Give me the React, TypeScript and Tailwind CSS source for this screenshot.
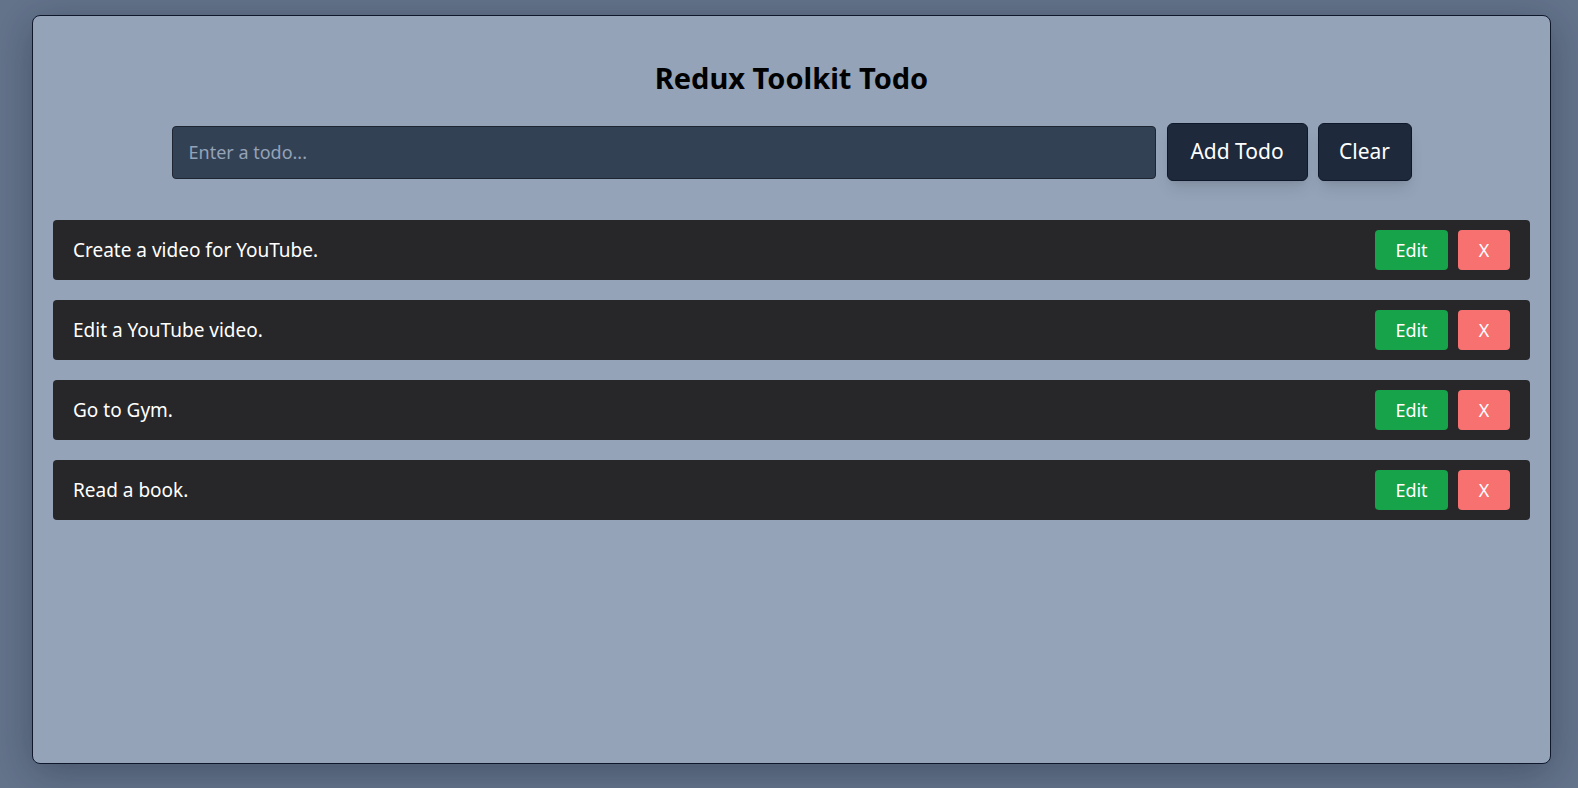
import { useState } from "react";

type Todo = {
  id: number;
  text: string;
};

const initialTodos: Todo[] = [
  { id: 1, text: "Create a video for YouTube." },
  { id: 2, text: "Edit a YouTube video." },
  { id: 3, text: "Go to Gym." },
  { id: 4, text: "Read a book." },
];

function TodoItem({ todo, onRemove }: { todo: Todo; onRemove: (id: number) => void }) {
  return (
    <li className="flex h-[60px] items-center justify-between rounded bg-[#27272a] px-5">
      <span className="text-[19px] text-white">{todo.text}</span>
      <div className="flex items-center gap-2.5">
        <button className="h-10 w-[73px] rounded bg-[#16a34a] text-lg text-white">Edit</button>
        <button
          className="h-10 w-[52px] rounded bg-[#f87171] text-lg text-white"
          onClick={() => onRemove(todo.id)}
        >
          X
        </button>
      </div>
    </li>
  );
}

export default function App() {
  const [todos, setTodos] = useState<Todo[]>(initialTodos);
  const [input, setInput] = useState("");

  const addTodo = () => {
    if (!input.trim()) return;
    setTodos([...todos, { id: Date.now(), text: input.trim() }]);
    setInput("");
  };

  return (
    <div
      className="min-h-screen bg-[#64748b] pb-6 pl-8 pr-[27px] pt-[15px]"
      style={{ fontFamily: '"Noto Sans", "Open Sans", sans-serif' }}
    >
      <div className="h-[749px] rounded-lg border border-[#0f172a] bg-[#94a3b8] px-5 pt-11 shadow-[0_8px_40px_rgba(15,23,42,0.35)]">
        <h1 className="text-center text-[29px] leading-9 font-bold text-black">Redux Toolkit Todo</h1>

        <div className="mx-auto mt-[27px] flex w-[1240px] items-center">
          <input
            value={input}
            onChange={(e) => setInput(e.target.value)}
            placeholder="Enter a todo..."
            className="h-[53px] flex-1 rounded border border-[#1e2533] bg-[#334155] px-4 text-lg text-white placeholder:text-[#94a3b8] outline-none"
          />
          <button
            onClick={addTodo}
            className="ml-[11px] h-[58px] w-[141px] rounded-md border border-[#0f172a] bg-[#1e293b] text-[21px] text-white shadow-lg"
          >
            Add Todo
          </button>
          <button
            onClick={() => setTodos([])}
            className="ml-2.5 h-[58px] w-[94px] rounded-md border border-[#0f172a] bg-[#1e293b] text-[21px] text-white shadow-lg"
          >
            Clear
          </button>
        </div>

        <ul className="mt-[39px] flex flex-col gap-5">
          {todos.map((todo) => (
            <TodoItem key={todo.id} todo={todo} onRemove={(id) => setTodos(todos.filter((t) => t.id !== id))} />
          ))}
        </ul>
      </div>
    </div>
  );
}
